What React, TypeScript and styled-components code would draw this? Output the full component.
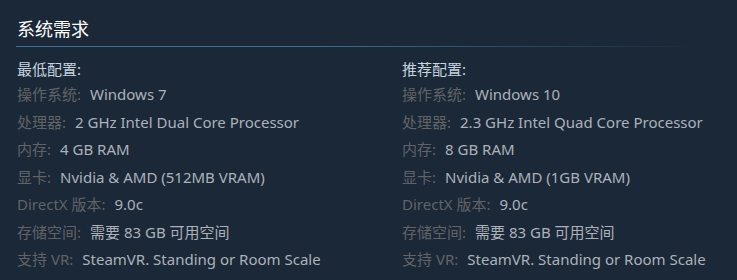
import React from "react";
import styled, { createGlobalStyle } from "styled-components";

const Global = createGlobalStyle`
  html, body { margin: 0; padding: 0; background: #1b2838; }
  body { font-family: "Noto Sans", "Noto Sans CJK SC", sans-serif; }
`;

const Page = styled.div`
  width: 737px;
  height: 280px;
  background: #1b2838;
  padding: 0 37px 0 16px;
  box-sizing: border-box;
  overflow: hidden;
`;

const Title = styled.h2`
  margin: 0;
  padding: 17px 0 5px 1px;
  font-size: 18px;
  font-weight: 400;
  line-height: 24px;
  color: #ffffff;
  font-family: "Noto Sans", "Noto Sans CJK SC", sans-serif;
`;

const Rule = styled.div`
  height: 1px;
  background: linear-gradient(to right, #3b6e8c 0%, #3b6e8c 45%, rgba(59, 110, 140, 0) 100%);
`;

const Columns = styled.div`
  display: grid;
  grid-template-columns: 385px 1fr;
  padding-left: 1px;
  padding-top: 12px;
`;

const Column = styled.div`
  display: flex;
  flex-direction: column;
`;

const Heading = styled.div`
  font-size: 15px;
  line-height: 20px;
  color: #c6d4df;
  margin-bottom: 2px;
`;

const List = styled.ul`
  list-style: none;
  margin: 0;
  padding: 0;
`;

const Item = styled.li`
  font-size: 15px;
  line-height: 27.5px;
  color: #acb2b8;
  white-space: nowrap;
`;

const Label = styled.span`
  color: #626366;
  margin-right: 9px;
`;

type Spec = { label: string; value: string };

const minimum: Spec[] = [
  { label: "操作系统:", value: "Windows 7" },
  { label: "处理器:", value: "2 GHz Intel Dual Core Processor" },
  { label: "内存:", value: "4 GB RAM" },
  { label: "显卡:", value: "Nvidia & AMD (512MB VRAM)" },
  { label: "DirectX 版本:", value: "9.0c" },
  { label: "存储空间:", value: "需要 83 GB 可用空间" },
  { label: "支持 VR:", value: "SteamVR. Standing or Room Scale" },
];

const recommended: Spec[] = [
  { label: "操作系统:", value: "Windows 10" },
  { label: "处理器:", value: "2.3 GHz Intel Quad Core Processor" },
  { label: "内存:", value: "8 GB RAM" },
  { label: "显卡:", value: "Nvidia & AMD (1GB VRAM)" },
  { label: "DirectX 版本:", value: "9.0c" },
  { label: "存储空间:", value: "需要 83 GB 可用空间" },
  { label: "支持 VR:", value: "SteamVR. Standing or Room Scale" },
];

const SpecColumn = ({ heading, specs }: { heading: string; specs: Spec[] }) => (
  <Column>
    <Heading>{heading}</Heading>
    <List>
      {specs.map((s) => (
        <Item key={s.label}>
          <Label>{s.label}</Label>
          {s.value}
        </Item>
      ))}
    </List>
  </Column>
);

export default function App() {
  return (
    <Page>
      <Global />
      <Title>系统需求</Title>
      <Rule />
      <Columns>
        <SpecColumn heading="最低配置:" specs={minimum} />
        <SpecColumn heading="推荐配置:" specs={recommended} />
      </Columns>
    </Page>
  );
}
